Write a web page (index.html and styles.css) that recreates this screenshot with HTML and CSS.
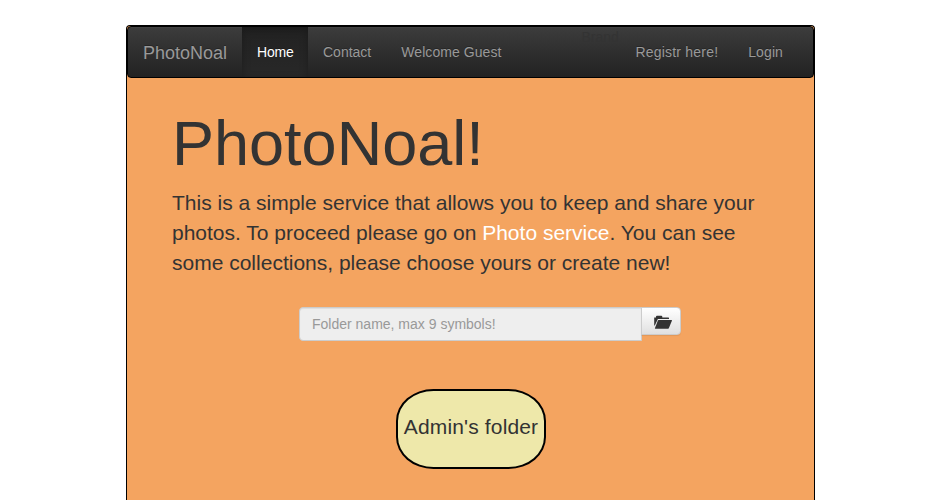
FILE: index.html
```html
<!DOCTYPE html>
<html lang="en">
<head>
<meta charset="utf-8">
<title>PhotoNoal</title>
<link rel="stylesheet" href="styles.css">
</head>
<body>
<div class="container">
  <nav class="navbar">
    <a class="navbar-brand" href="#">PhotoNoal</a>
    <ul class="nav">
      <li class="home"><a class="active" href="#">Home</a></li>
      <li><a href="#">Contact</a></li>
      <li><a class="guest" href="#">Welcome Guest</a></li>
    </ul>
    <span class="brand-note">Brand</span>
    <ul class="nav nav-right">
      <li><a class="register" href="#">Registr here!</a></li>
      <li><a class="login" href="#">Login</a></li>
    </ul>
  </nav>
  <main class="jumbotron">
    <h1>PhotoNoal!</h1>
    <p>This is a simple service that allows you to keep and share your photos. To proceed please go on <a href="#">Photo service</a>. You can see some collections, please choose yours or create new!</p>
    <form class="folder-form">
      <input type="text" placeholder="Folder name, max 9 symbols!">
      <button type="button" aria-label="Create folder">
        <svg width="18" height="14" viewBox="0 0 18 14"><path d="M0.2 10.5V2.5H2V1.5L2.7 .8H7.6L8.3 1.5V2.5H14.6L15 3V4.1H3.9L.8 10.5Z"/><path d="M4.4 5H17.6L18 5.5L14.8 13.2L14.2 13.7H1.2L.9 13.2L3.9 5.5Z"/></svg>
      </button>
    </form>
    <a class="folder" href="#">Admin's folder</a>
  </main>
</div>
</body>
</html>
```

FILE: styles.css
```css
* { box-sizing: border-box; }
body {
  margin: 0;
  font: 14px/20px "Liberation Sans", Arial, sans-serif;
  color: #333;
  background: #fff;
}
a { text-decoration: none; }
.container {
  width: 689px;
  height: 475px;
  margin: 25px 0 0 126px;
  border: 1px solid #000;
  border-bottom: 0;
  border-radius: 4px 4px 0 0;
  background: sandybrown;
}
.navbar {
  display: flex;
  height: 52px;
  border: 1px solid #000;
  border-radius: 4px;
  background: linear-gradient(#3c3c3c, #222);
  box-shadow: inset 0 1px 0 rgba(255,255,255,.03);
  text-shadow: 0 -1px 0 rgba(0,0,0,.25);
}
.navbar-brand { width: 114px; padding: 16px 15px 14px; font-size: 18px; color: #999; }
.nav { display: flex; margin: 0; padding: 0; list-style: none; }
.nav a { display: block; height: 50px; padding: 15px; color: #999; }
.nav .home { width: 66px; }
.nav .active {
  color: #fff;
  letter-spacing: -.2px;
  background: linear-gradient(#222, #282828);
  box-shadow: inset 0 3px 9px rgba(0,0,0,.25);
}
.nav .guest { letter-spacing: .07px; }
.brand-note { margin-left: 65px; color: #333; text-shadow: none; }
.nav-right { margin-left: auto; margin-right: 15px; }
.nav .register { letter-spacing: .2px; }
.nav .login { letter-spacing: .1px; }
.jumbotron { padding: 34px 45px 0; }
h1 { margin: 0; font-size: 63px; font-weight: normal; line-height: 63px; }
p { margin: 13px 0 0; font-size: 21px; line-height: 30px; }
p a { color: #fff; }
.folder-form { display: flex; align-items: flex-start; margin: 29px 0 0 127px; }
.folder-form input {
  width: 343px;
  height: 34px;
  padding: 6px 12px;
  border: 1px solid #ccc;
  border-radius: 4px 0 0 4px;
  background: #eee;
  box-shadow: inset 0 1px 1px rgba(0,0,0,.075);
  font: inherit;
}
.folder-form input::placeholder { color: #999; opacity: 1; }
.folder-form button {
  display: flex;
  width: 40px;
  height: 28px;
  margin-left: -1px;
  padding: 7px 0 0 12px;
  border: 1px solid #ccc;
  border-radius: 0 4px 4px 0;
  background: linear-gradient(#fff, #e0e0e0);
  box-shadow: 0 1px 1px rgba(0,0,0,.075);
}
.folder-form svg { flex: none; fill: #333; }
.folder {
  display: block;
  width: 150px;
  height: 80px;
  margin: 48px 0 0 224px;
  border: 2px solid #000;
  border-radius: 25% / 40%;
  background: palegoldenrod;
  color: #333;
  font-size: 21px;
  letter-spacing: .15px;
  line-height: 72px;
  text-align: center;
}
```
